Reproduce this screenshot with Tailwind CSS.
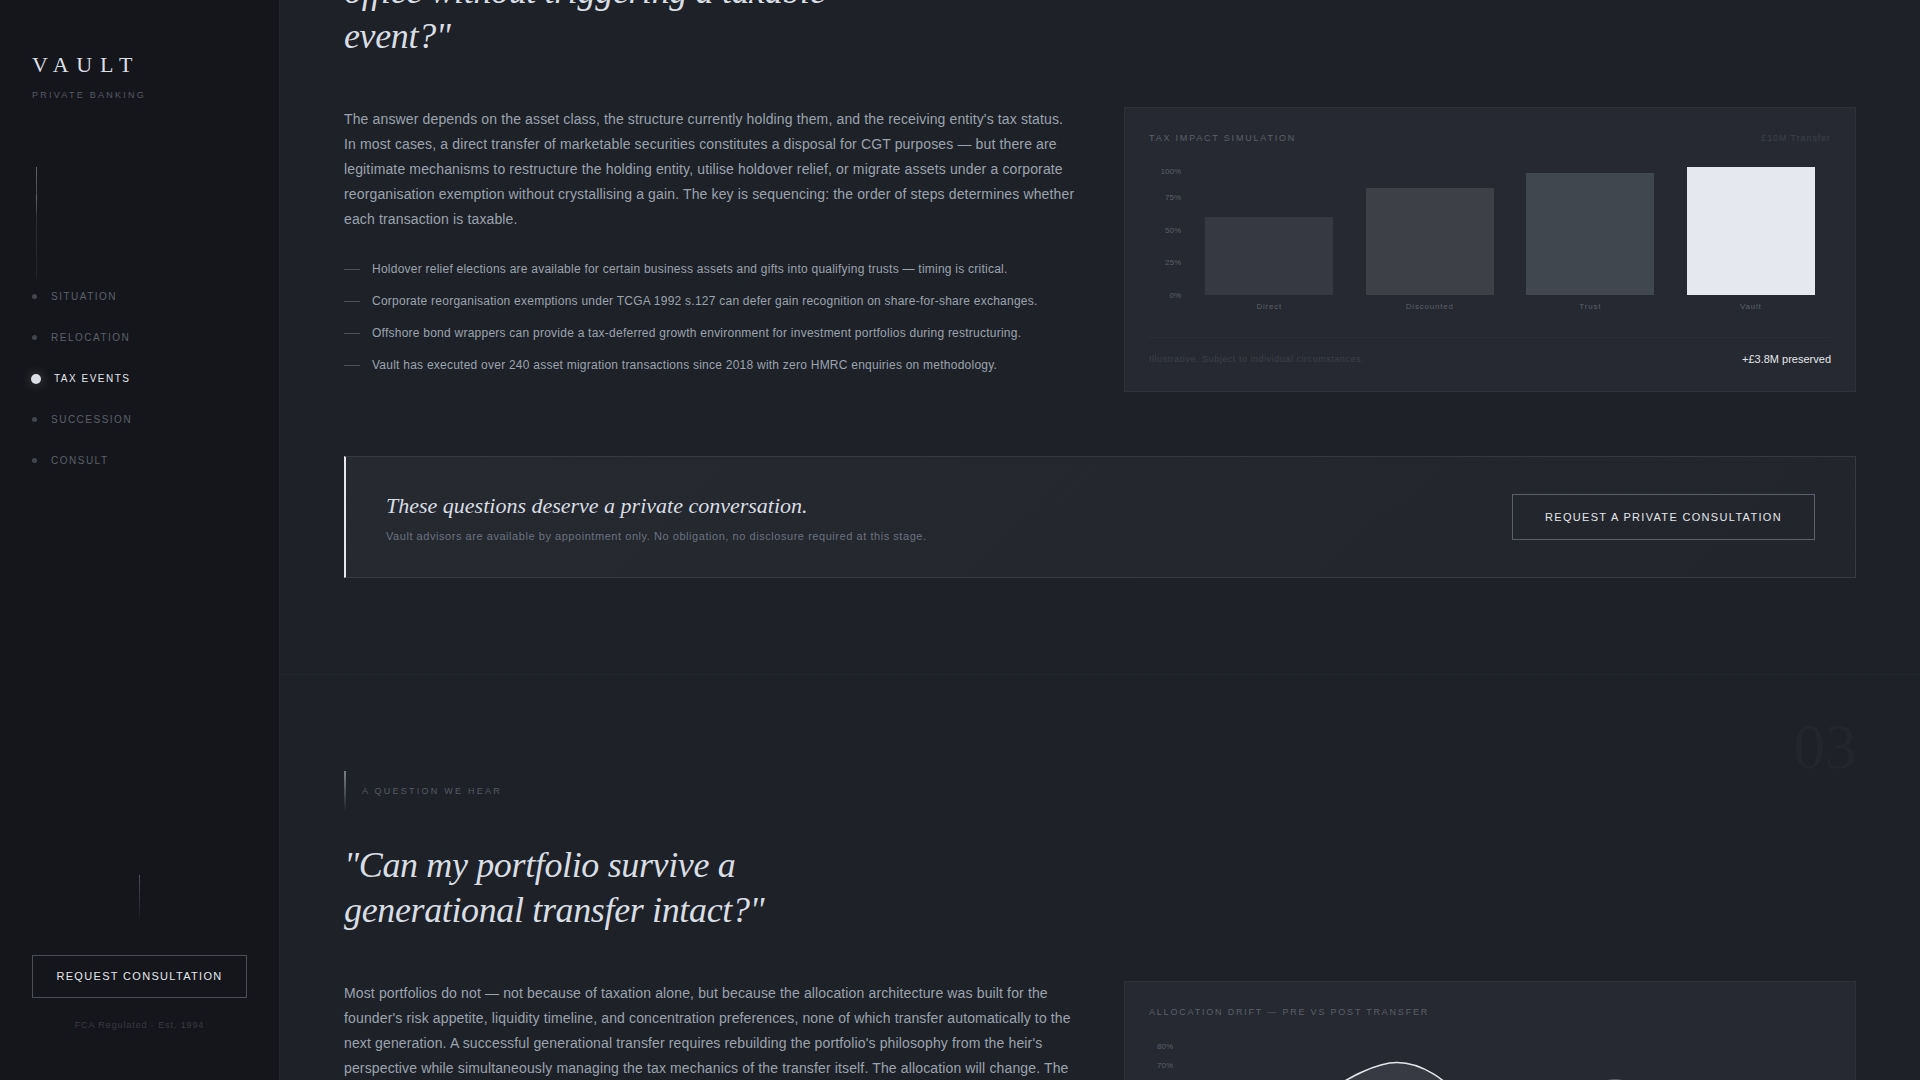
<!DOCTYPE html>
<html lang="en">
<head>
<meta charset="utf-8">
<title>Vault Private Banking</title>
<script src="https://cdn.jsdelivr.net/npm/@tailwindcss/browser@4"></script>
</head>
<body class="flex h-screen overflow-hidden bg-[#1e2128] font-['Liberation_Sans',Arial,sans-serif] text-[#9ca3af]">

<aside class="flex w-[280px] shrink-0 flex-col border-r border-[#22262e] bg-[#15161b] px-8 pt-12 pb-12">
  <div class="font-['Liberation_Serif',serif] text-[22px] leading-[33px] tracking-[0.35em] text-[#dcdfe6]">VAULT</div>
  <div class="mt-1.5 text-[9px] leading-4 tracking-[0.25em] text-[#555a63]">PRIVATE BANKING</div>

  <div class="mt-16 ml-1 flex h-28 w-px flex-col bg-linear-to-b from-[#34363b] to-[#212328]">
    <div class="h-7 bg-linear-to-b from-[#5f6166] to-[#4a4c51]"></div>
    <div class="h-5 bg-linear-to-b from-[#65676c] to-[#3c3e43]"></div>
  </div>

  <nav class="mt-2.5 flex flex-col gap-[26px] text-[10px] leading-[15px] tracking-[0.15em] text-[#5b606a]">
    <a href="#situation" class="flex items-center gap-3.5"><span class="size-[5px] rounded-full bg-[#43464c]"></span>SITUATION</a>
    <a href="#relocation" class="flex items-center gap-3.5"><span class="size-[5px] rounded-full bg-[#43464c]"></span>RELOCATION</a>
    <a href="#tax" class="flex items-center gap-3.5 text-[#e5e7eb]"><span class="size-2 rounded-full bg-[#dcdfe6] shadow-[0_0_0_1px_#dcdfe6,0_0_12px_rgba(229,231,235,0.4)]"></span>TAX EVENTS</a>
    <a href="#succession" class="flex items-center gap-3.5"><span class="size-[5px] rounded-full bg-[#43464c]"></span>SUCCESSION</a>
    <a href="#consult" class="flex items-center gap-3.5"><span class="size-[5px] rounded-full bg-[#43464c]"></span>CONSULT</a>
  </nav>

  <div class="mt-auto flex flex-col items-center">
    <div class="h-12 w-px bg-linear-to-b from-[#4b5059] to-transparent"></div>
    <button type="button" class="mt-8 h-[43px] w-full border border-[#4b4f55] text-[11px] tracking-[0.12em] whitespace-nowrap text-[#e5e7eb]">REQUEST CONSULTATION</button>
    <div class="mt-5 text-[9px] leading-[14px] tracking-[0.1em] text-[#373a41]">FCA Regulated · Est. 1994</div>
  </div>
</aside>

<main class="h-screen min-w-0 flex-1 overflow-hidden">
  <section id="tax" class="border-b border-[#23272e] px-16 pb-24">
    <h2 class="-mt-[31px] max-w-[520px] font-['Liberation_Serif',serif] text-4xl leading-[45px] tracking-[-0.01em] text-[#d9dde4] italic">office without triggering a taxable event?"</h2>
    <div class="mt-12 grid grid-cols-2 gap-12">
      <div>
        <p class="text-sm leading-[25px] tracking-[0.01em]">The answer depends on the asset class, the structure currently holding them, and the receiving entity's tax status. In most cases, a direct transfer of marketable securities constitutes a disposal for CGT purposes — but there are legitimate mechanisms to restructure the holding entity, utilise holdover relief, or migrate assets under a corporate reorganisation exemption without crystallising a gain. The key is sequencing: the order of steps determines whether each transaction is taxable.</p>
        <ul class="mt-[27px] flex flex-col gap-3 text-xs leading-5 tracking-[0.02em]">
          <li class="flex items-center gap-3"><span class="h-px w-4 bg-[#4b5059]"></span>Holdover relief elections are available for certain business assets and gifts into qualifying trusts — timing is critical.</li>
          <li class="flex items-center gap-3"><span class="h-px w-4 bg-[#4b5059]"></span>Corporate reorganisation exemptions under TCGA 1992 s.127 can defer gain recognition on share-for-share exchanges.</li>
          <li class="flex items-center gap-3"><span class="h-px w-4 bg-[#4b5059]"></span>Offshore bond wrappers can provide a tax-deferred growth environment for investment portfolios during restructuring.</li>
          <li class="flex items-center gap-3"><span class="h-px w-4 bg-[#4b5059]"></span>Vault has executed over 240 asset migration transactions since 2018 with zero HMRC enquiries on methodology.</li>
        </ul>
      </div>
      <div class="border border-[#2e3138] bg-[#262931] p-6">
        <div class="flex justify-between text-[9px] leading-3">
          <h3 class="tracking-[0.2em] text-[#5b606a]">TAX IMPACT SIMULATION</h3>
          <span class="tracking-[0.1em] text-[#3d4149]">£10M Transfer</span>
        </div>
        <!-- Bar chart: axis labels, then four equal columns -->
        <div class="mt-[22px] flex text-[8px]">
          <div class="flex w-8 flex-col pt-px text-right leading-[10px] text-[#5b606a]">
            <span class="h-[26px]">100%</span><span class="h-[33px]">75%</span><span class="h-8">50%</span><span class="h-[33px]">25%</span><span class="h-[10px]">0%</span>
          </div>
          <div class="ml-2 flex-1">
            <div class="flex h-[129px] items-end">
              <div class="flex flex-1 justify-center"><div class="h-[78px] w-4/5 bg-[#363942]"></div></div>
              <div class="flex flex-1 justify-center"><div class="h-[107px] w-4/5 bg-[#3d4047]"></div></div>
              <div class="flex flex-1 justify-center"><div class="h-[122px] w-4/5 bg-[#41474f]"></div></div>
              <div class="flex flex-1 justify-center"><div class="h-[128px] w-4/5 bg-[#e5e8ef]"></div></div>
            </div>
            <div class="mt-[7px] flex h-[35px] text-center leading-[10px] tracking-[0.1em] text-[#5b606a]">
              <span class="flex-1">Direct</span><span class="flex-1">Discounted</span><span class="flex-1">Trust</span><span class="flex-1">Vault</span>
            </div>
          </div>
        </div>
        <div class="flex items-center justify-between border-t border-[#2b2e36] pt-[13px]">
          <span class="text-[9px] leading-4 tracking-[0.06em] text-[#3d4149]">Illustrative. Subject to individual circumstances.</span>
          <span class="text-[11px] leading-4 text-[#e5e7eb]">+£3.8M preserved</span>
        </div>
      </div>
    </div>
    <div class="mt-16 flex items-center justify-between border border-l-2 border-[#373a41] border-l-[#e5e7eb] bg-linear-135 from-[#262930] to-[#22252c] px-10 py-[34px]">
      <div>
        <p class="font-['Liberation_Serif',serif] text-[22px] leading-[30px] text-[#d9dde4] italic">These questions deserve a private conversation.</p>
        <p class="mt-2 text-[11px] leading-[14px] tracking-[0.05em] text-[#6b7280]">Vault advisors are available by appointment only. No obligation, no disclosure required at this stage.</p>
      </div>
      <button type="button" class="h-[46px] border border-[#5b606a] px-8 text-[11px] tracking-[0.12em] text-[#e5e7eb]">REQUEST A PRIVATE CONSULTATION</button>
    </div>
  </section>

  <section id="succession" class="relative px-16 py-24">
    <div class="absolute top-9 right-16 font-['Liberation_Serif',serif] text-[64px] leading-[72px] tracking-[-0.01em] text-[#23262d]">03</div>
    <div class="flex h-10 items-center gap-4">
      <span class="h-full w-0.5 bg-linear-to-b from-[#7b8088] to-transparent"></span>
      <span class="text-[9px] leading-4 tracking-[0.25em] text-[#555a63]">A QUESTION WE HEAR</span>
    </div>
    <h2 class="mt-8 max-w-[520px] font-['Liberation_Serif',serif] text-4xl leading-[45px] tracking-[-0.01em] text-[#d9dde4] italic">"Can my portfolio survive a generational transfer intact?"</h2>
    <div class="mt-12 grid grid-cols-2 gap-12">
      <p class="text-sm leading-[25px] tracking-[0.01em]">Most portfolios do not — not because of taxation alone, but because the allocation architecture was built for the founder's risk appetite, liquidity timeline, and concentration preferences, none of which transfer automatically to the next generation. A successful generational transfer requires rebuilding the portfolio's philosophy from the heir's perspective while simultaneously managing the tax mechanics of the transfer itself. The allocation will change. The</p>
      <div class="border border-[#2e3138] bg-[#262931] p-6">
        <h3 class="text-[9px] leading-3 tracking-[0.2em] text-[#5b606a]">ALLOCATION DRIFT — PRE VS POST TRANSFER</h3>
        <div class="mt-6 flex">
          <div class="flex w-6 flex-col text-right text-[8px] leading-[10px] text-[#5b606a]">
            <span class="h-[19px]">80%</span><span>70%</span>
          </div>
          <svg class="ml-2 h-32 flex-1" viewBox="0 0 650 128" preserveAspectRatio="none" fill="none">
            <path d="M20 110C50 100 70 92 100 75C145 52 185 20.500 216 20.500C247 20.500 270 45 300 70L340 110Z" fill="#373a42"/>
            <path d="M20 110C50 100 70 92 100 75C145 52 185 20.500 216 20.500C247 20.500 270 45 300 70L340 110" stroke="#e5e7eb" stroke-width="1.5"/>
            <path d="M340 110C375 70 405 38 434 38S495 70 530 110" stroke="#6b7280" stroke-width="1.5"/>
          </svg>
        </div>
      </div>
    </div>
  </section>
</main>
</body>
</html>
